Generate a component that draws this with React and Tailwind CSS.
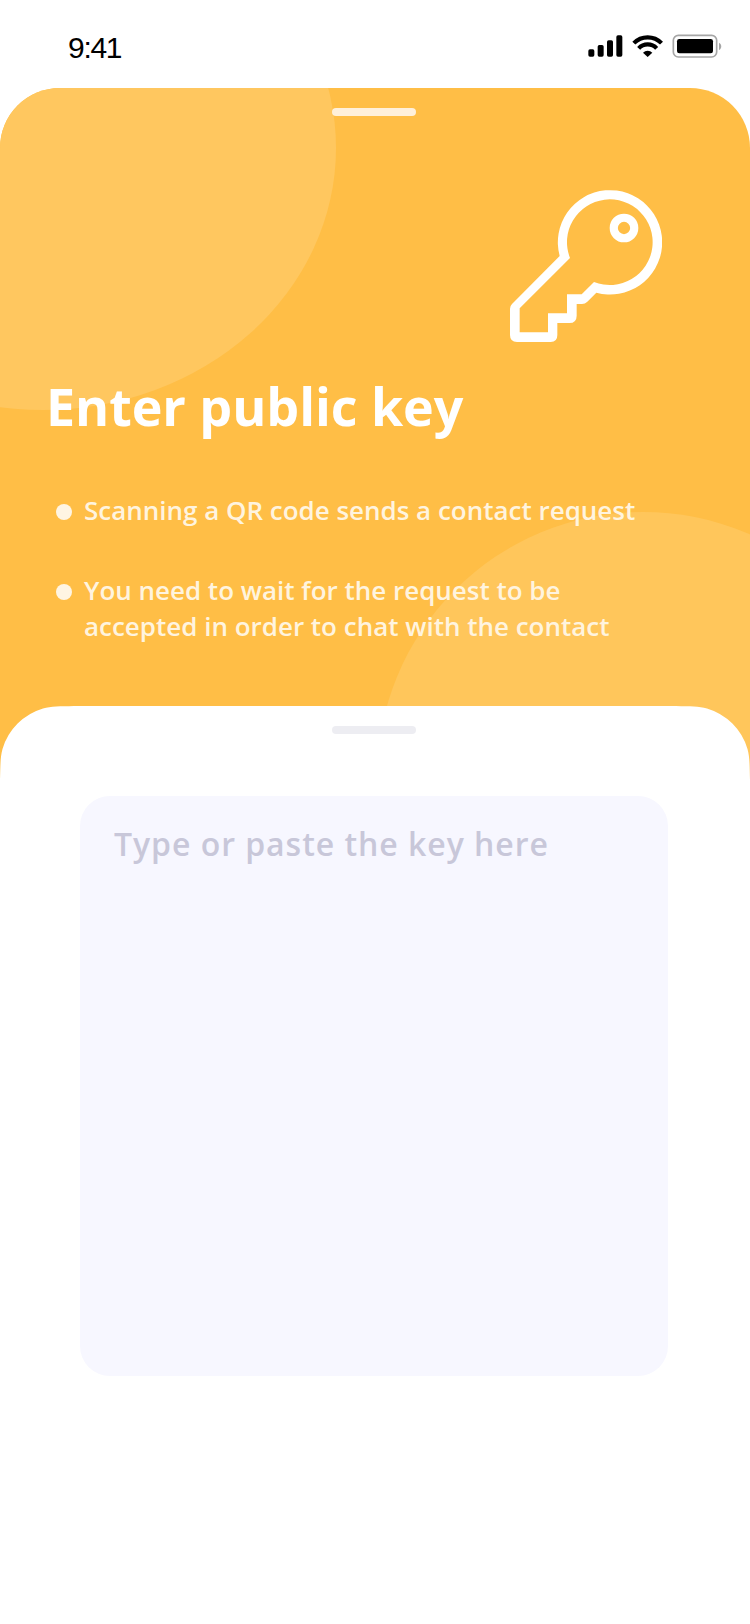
import React from "react";

function StatusBar() {
  return (
    <header className="flex h-[88px] items-start justify-between bg-white pl-[68px] pr-[27px] pt-[32px]">
      <span className="font-['Liberation_Sans',sans-serif] text-[30px] leading-[32px] tracking-[-1.3px] text-black">9:41</span>
      <svg className="mt-[0.5px] h-[24px] w-[136px]" viewBox="50 38 408 72" fill="#000" overflow="visible">
        <rect x="54" y="87" width="18" height="22" rx="5" />
        <rect x="82" y="74" width="18" height="35" rx="5" />
        <rect x="110" y="60" width="18" height="49" rx="5" />
        <rect x="138" y="45" width="18" height="64" rx="5" />
        <g fill="none" stroke="#000" strokeWidth="12.5">
          <path d="M190.500 68.500A58 58 0 0 1 273.500 68.500" />
          <path d="M205 84A37 37 0 0 1 259 84" />
        </g>
        <path d="M232 110L218 97A20 20 0 0 1 246 97Z" />
        <rect x="309" y="45" width="130" height="65" rx="15" fill="none" stroke="#a6a6a6" strokeWidth="5" />
        <rect x="320" y="56" width="108" height="43" rx="7" />
        <path d="M446 67C455 71 455 85 446 89Z" fill="#a6a6a6" />
      </svg>
    </header>
  );
}

function KeyIcon() {
  return (
    <svg className="h-[152px] w-[152px]" viewBox="60 60 456 456" fill="#fff" fillRule="evenodd">
      <path d="M209 258A156.500 156.500 0 1 1 319 368L292 395Q285 402 276 402H260V437Q260 459 238 459H202V495Q202 516 182 516H81Q60 516 60 495V416Q60 408 66 402ZM240 264L89 415V487H174V430H231V373H275L312 336A128.500 128.500 0 1 0 240 264Z" />
      <path d="M402 131a43 43 0 1 1 0 86a43 43 0 1 1 0 -86ZM402 155.500a18.500 18.500 0 1 0 0 37a18.500 18.500 0 1 0 0 -37Z" />
    </svg>
  );
}

function Tip({ children }) {
  return (
    <li className="flex gap-3">
      <span className="mt-3 size-4 shrink-0 rounded-full bg-[#fff5e3]" />
      <span>{children}</span>
    </li>
  );
}

export default function App() {
  return (
    <div className="flex h-[1624px] w-[750px] flex-col overflow-hidden bg-white font-['Open_Sans',sans-serif]">
      <StatusBar />
      <section className="relative h-[696px] shrink-0 overflow-hidden rounded-t-[60px] bg-[#ffbe46]">
        <div className="absolute left-[-250px] top-[-202px] h-[524px] w-[586px] rounded-[50%] bg-[#ffc75f]" />
        <div className="absolute left-[377px] top-[424px] size-[532px] rounded-full bg-[#ffc65b]" />
        <div className="relative flex flex-col pt-5">
          <div className="ml-[332px] h-2 w-[84px] rounded-full bg-[#fff0da]" />
          <div className="mr-[88px] mt-[74px] self-end">
            <KeyIcon />
          </div>
          <h1 className="ml-[46px] mt-[28px] whitespace-nowrap text-[52px] font-bold leading-[72px] tracking-[-0.06px] text-white">Enter public key</h1>
          <ul className="ml-14 mt-[50px] flex flex-col gap-11 whitespace-nowrap text-[26px] font-semibold leading-[36px] tracking-[-0.01px] text-[#fff4df]">
            <Tip>Scanning a QR code sends a contact request</Tip>
            <Tip>
              You need to wait for the request to be
              <br />
              accepted in order to chat with the contact
            </Tip>
          </ul>
        </div>
      </section>
      <main className="relative -mt-[78px] flex h-[918px] shrink-0 flex-col bg-white pt-5 [clip-path:path('M0_74C0.4_60_0.2_51_2.5_43A60_60_0_0_1_43_2.5C51_0.2_60_0.4_74_0H676C690_0.4_699_0.2_707_2.5A60_60_0_0_1_747.5_43C749.8_51_749.6_60_750_74V918H0Z')]">
        <div className="ml-[332px] h-2 w-[84px] shrink-0 rounded-full bg-[#ededf2]" />
        <textarea
          className="ml-20 mt-[62px] h-[580px] w-[588px] resize-none rounded-[30px] bg-[#f7f7ff] px-[34px] pt-[26px] text-[32px] font-semibold leading-[44px] tracking-[0.96px] outline-none placeholder:text-[#c8c7d9] placeholder:opacity-100"
          placeholder="Type or paste the key here"
        />
      </main>
    </div>
  );
}
